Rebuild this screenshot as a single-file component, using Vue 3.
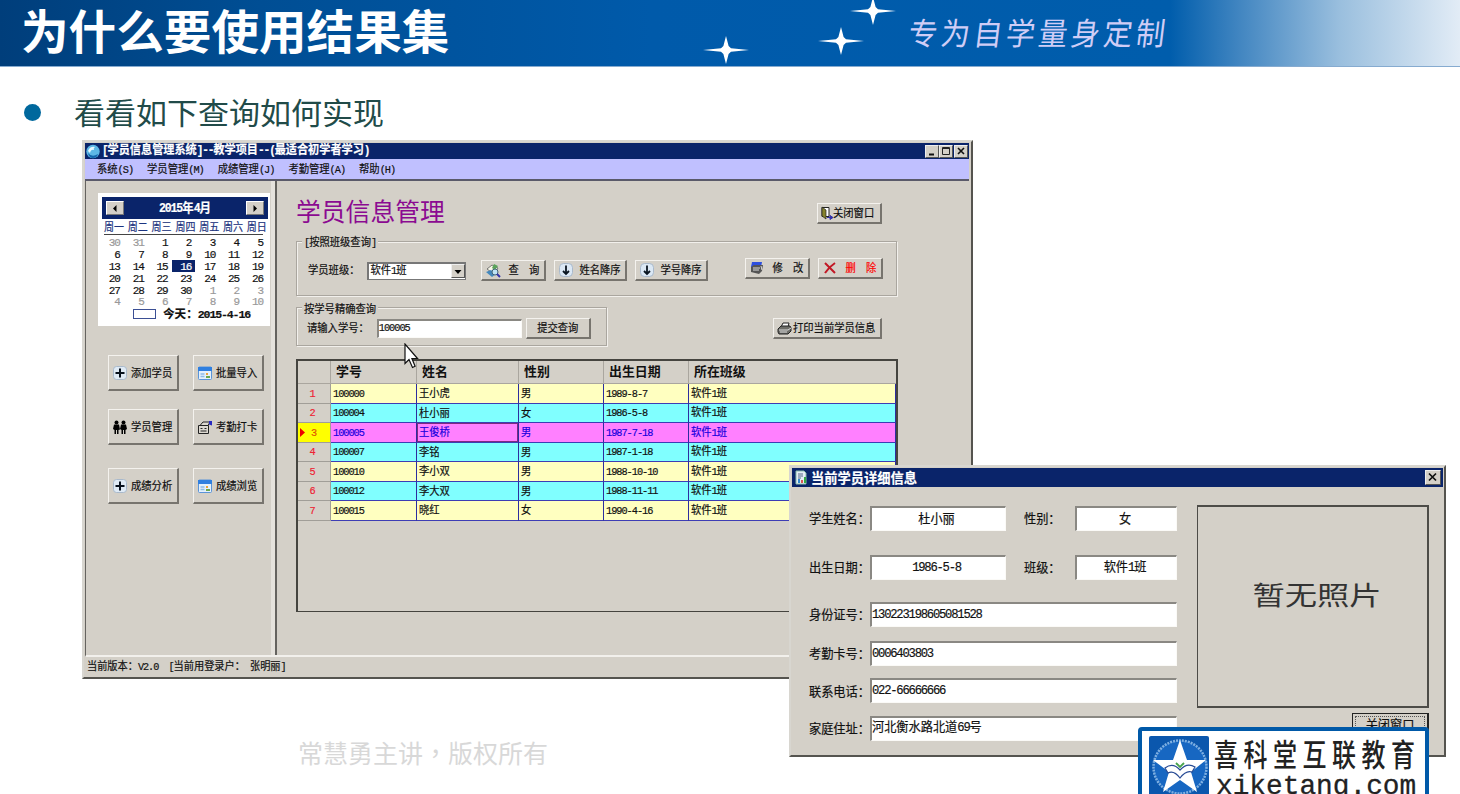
<script setup>
import { h } from 'vue'

// Half-width runs sit on half an em, full-width characters on one em.
const T = (props) =>
  h('span', { class: 'gt' }, props.t.split(/([\x20-\x7e]+)/).filter(Boolean).map((s) =>
    h('span', { class: /^[\x20-\x7e]/.test(s) ? 'hw' : 'fw' }, s)))
T.props = ['t']

const stars = [{ x: 726, y: 50 }, { x: 841, y: 41 }, { x: 873, y: 11 }]
const menus = [['系统', 'S'], ['学员管理', 'M'], ['成绩管理', 'J'], ['考勤管理', 'A'], ['帮助', 'H']]
const week = ['一', '二', '三', '四', '五', '六', '日']
const days = []
for (let i = 0; i < 42; i++) {
  const n = i < 2 ? 30 + i : i < 32 ? i - 1 : i - 31
  days.push({ n, dim: i < 2 || i > 31, now: i === 17 })
}
const tools = [
  ['plus', '添加学员'], ['cal', '批量导入'],
  ['people', '学员管理'], ['card', '考勤打卡'],
  ['plus', '成绩分析'], ['cal', '成绩浏览'],
]
const heads = ['', '学号', '姓名', '性别', '出生日期', '所在班级']
const rows = [
  ['100000', '王小虎', '男', '1989-8-7'],
  ['100004', '杜小丽', '女', '1986-5-8'],
  ['100005', '王俊桥', '男', '1987-7-18'],
  ['100007', '李铭', '男', '1987-1-18'],
  ['100010', '李小双', '男', '1988-10-10'],
  ['100012', '李大双', '男', '1988-11-11'],
  ['100015', '晓红', '女', '1990-4-16'],
].map((r) => [...r, '软件1班'])
const longFields = [
  ['身份证号：', '130223198605081528'],
  ['考勤卡号：', '0006403803'],
  ['联系电话：', '022-66666666'],
  ['家庭住址：', '河北衡水路北道69号'],
]
</script>

<template>
  <div class="slide">
    <header class="banner">
      <h1>为什么要使用结果集</h1>
      <svg class="stars" width="1460" height="66">
        <path v-for="s in stars" :key="s.x" :transform="`translate(${s.x} ${s.y})`" fill="#fff"
          d="M-23 0L-5-1.8-2.6-4 0-14 2.6-4 5-1.8 23 0 5 1.8 2.6 4 0 14-2.6 4-5 1.800Z" />
      </svg>
      <div class="slogan">专为自学量身定制</div>
    </header>
    <div class="point"><i></i><span>看看如下查询如何实现</span></div>
    <div class="watermark">常慧勇主讲<span>，</span>版权所有</div>

    <section class="win main-win">
      <div class="titlebar">
        <svg class="globe" width="14" height="15" viewBox="0 0 14 15">
          <circle cx="7" cy="7.5" r="6.7" fill="#5db7e6" /><path d="M2 9q4 5 10 1q-1 4-5 4t-5-5" fill="#1466ad" />
          <path d="M2 7q2-5 7-4q-2 1-1 3q-3-1-4 3z" fill="#e6f8ff" />
        </svg>
        <T t="[学员信息管理系统]--教学项目--(最适合初学者学习)" />
        <div class="caps">
          <b><svg width="13" height="11"><path d="M3 8.5h5" stroke="#111" stroke-width="2" /></svg></b>
          <b><svg width="13" height="11"><path d="M2.5 1.5h7v7h-7zM2.5 2.5h7" stroke="#222" fill="none" /></svg></b>
          <b class="x"><svg width="13" height="11"><path d="M3 2l6 6M9 2l-6 6" stroke="#111" stroke-width="1.6" /></svg></b>
        </div>
      </div>
      <nav class="menu">
        <span v-for="m in menus" :key="m[0]"><T :t="m[0] + '('" /><u><T :t="m[1]" /></u><T t=")" /></span>
      </nav>
      <div class="client">
        <aside>
          <div class="calendar">
            <div class="month">
              <b><svg width="16" height="13"><path d="M9.500 3v7L6 6.500z" /></svg></b>
              <T t="2015年4月" />
              <b><svg width="16" height="13"><path d="M6.500 3v7L10 6.500z" /></svg></b>
            </div>
            <div class="week"><span v-for="w in week" :key="w"><T :t="'周' + w" /></span></div>
            <div class="days">
              <span v-for="(d, i) in days" :key="i" :class="{ dim: d.dim, now: d.now }"><T :t="String(d.n)" /></span>
            </div>
            <div class="today"><i></i><T t="今天：2015-4-16" /></div>
          </div>
          <div class="tools">
            <button v-for="(b, i) in tools" :key="i" class="btn">
              <svg width="14" height="14" viewBox="0 0 14 14">
                <template v-if="b[0] === 'plus'">
                  <rect x=".5" y=".5" width="13" height="13" rx="3" fill="#dfeaf5" stroke="#a9b9cb" />
                  <path d="M7 2.500v9M2.500 7h9" stroke="#06101c" stroke-width="2" />
                </template>
                <template v-else-if="b[0] === 'cal'">
                  <rect x=".5" y="1" width="13" height="12.500" rx="1" fill="#e4f0fc" stroke="#5a94d8" />
                  <path d="M0 1h14v4H0z" fill="#2f7fe0" />
                  <path d="M2.500 8h4M2.500 10.500h4" stroke="#8dbbe8" stroke-width="1.500" />
                  <path d="M8 7h2v2H8z" fill="#e8a33b" /><path d="M8 10h4v2H8z" fill="#6aa84f" />
                </template>
                <template v-else-if="b[0] === 'people'">
                  <circle cx="3.500" cy="2.500" r="2" /><circle cx="10.500" cy="2.500" r="2" />
                  <path d="M1 4.500h5l1 5-1.500.5V14H4V10H3v4H1.500V10L0 9zM8 4.500h5l1 4.500-1.500 1v4H11v-4h-1v4H8.500v-4L7 9z" />
                </template>
                <template v-else>
                  <path d="M.500 5.500h10v8h-10zM2 5.500l3-3.500h7l-2 3.500" fill="#dcd8d0" stroke="#222" />
                  <path d="M2.500 8.500h2M6.500 8.500h2M2.500 11h6" stroke="#222" />
                  <path d="M11 1h3v4.500l-3-1z" fill="#2a2ac0" />
                </template>
              </svg>
              <T :t="b[1]" />
            </button>
          </div>
        </aside>
        <main>
          <div class="heading">
            <h2>学员信息管理</h2>
            <button class="btn">
              <svg width="12" height="14" viewBox="0 0 12 14"><path d="M1 1.500h7v9H1z" fill="#fff" stroke="#222" /><path d="M1 1l4 3v9l-4-3z" fill="#85822b" stroke="#222" stroke-width=".7" /><path d="M6 11.500h4M9 9.500l3 2-3 2z" fill="#33a" stroke="#33a" /></svg>
              <T t="关闭窗口" />
            </button>
          </div>
          <div class="group by-class">
            <span class="legend"><T t="[按照班级查询]" /></span>
            <span class="lbl"><T t="学员班级：" /></span>
            <div class="select"><T t="软件1班" /><b><svg width="13" height="13"><path d="M2.500 5h7L6 9z" /></svg></b></div>
            <button class="btn query">
              <svg width="15" height="15" viewBox="0 0 15 15"><path d="M1 6l5-4 6 3-4 6z" fill="#f5f5e6" stroke="#777" /><path d="M8 1l4 2-3 4-3-2z" fill="#5ba35b" /><path d="M0 9l5-2 5 4-4 3z" fill="#4488bd" /><circle cx="9" cy="9" r="3" fill="#bfe3f5" stroke="#467" /><path d="M11 11l3 3" stroke="#33a" stroke-width="2" /></svg>
              <T t="查  询" />
            </button>
            <button v-for="s in ['姓名降序', '学号降序']" :key="s" class="btn sort">
              <svg width="14" height="14" viewBox="0 0 14 14"><rect x=".5" y=".5" width="13" height="13" rx="4" fill="#dbe8f5" stroke="#a9b9cb" /><path d="M7 2.500v8M4 8l3 3 3-3" fill="none" stroke="#0a1622" stroke-width="1.800" /></svg>
              <T :t="s" />
            </button>
            <button class="btn edit">
              <svg width="14" height="14" viewBox="0 0 14 14"><path d="M2 1h10l-1 5H1z" fill="#2d4fe0" /><path d="M1 6l3-2h9l-1 6-3 3-8-2z" fill="#555" /><path d="M3 7h7M3 9h6M11 5l1 4" stroke="#ddd" /></svg>
              <T t="修  改" />
            </button>
            <button class="btn del">
              <svg width="14" height="14" viewBox="0 0 14 14"><path d="M2 2q5 5 10 10M12 2Q6 6 2 12" fill="none" stroke="#c21825" stroke-width="2" /></svg>
              <T t="删  除" />
            </button>
          </div>
          <div class="second">
            <div class="group by-no">
              <span class="legend"><T t="按学号精确查询" /></span>
              <span class="lbl"><T t="请输入学号：" /></span>
              <div class="field"><T t="100005" /></div>
              <button class="btn"><T t="提交查询" /></button>
            </div>
            <button class="btn print">
              <svg width="15" height="13" viewBox="0 0 15 13"><path d="M4 5l2-4h6l-1 4z" fill="#fff" stroke="#222" /><path d="M1 7l3-3h9l1 2v3l-3 3H2L1 10z" fill="#6d6d68" stroke="#222" /><path d="M2 8h9l3-2M3 10h7" stroke="#ddd" fill="none" /></svg>
              <T t="打印当前学员信息" />
            </button>
          </div>
          <div class="table">
            <div class="tr th"><span v-for="(c, i) in heads" :key="i"><T :t="c" /></span></div>
            <div v-for="(r, i) in rows" :key="i" class="tr" :class="{ alt: i % 2, sel: i === 2 }">
              <span class="no"><svg v-if="i === 2" width="6" height="9"><path d="M0 0l5 4.500-5 4.500z" fill="#e00" /></svg><T :t="String(i + 1)" /></span>
              <span v-for="(c, j) in r" :key="j" :class="{ focus: i === 2 && j === 1 }"><T :t="c" /></span>
            </div>
          </div>
        </main>
      </div>
      <footer><T t="当前版本：V2.0  [当前用登录户： 张明丽]" /></footer>
      <svg class="cursor" width="16" height="26" viewBox="0 0 16 26"><path d="M1 1v19.500l4-4 3.500 8 2.600-1.300-3.200-7.700H13.500z" fill="#fff" stroke="#111" stroke-width="1.200" /></svg>
    </section>

    <section class="win dialog">
      <div class="titlebar">
        <svg width="12" height="15" viewBox="0 0 12 15"><path d="M1 1h8l2 2v11H1z" fill="#e5eef5" stroke="#8ba" /><path d="M3 4h5M3 6h5M3 8h3" stroke="#568" /><path d="M3 9h2v4H3z" fill="#38c" /><path d="M6 10h2v3H6z" fill="#d55" /><path d="M9 7h2v6H9z" fill="#3a4" /></svg>
        <T t="当前学员详细信息" />
        <div class="caps"><b><svg width="14" height="13"><path d="M3 2.500l7 7M10 2.500l-7 7" stroke="#111" stroke-width="1.700" /></svg></b></div>
      </div>
      <div class="detail">
        <div class="form">
          <div class="pair"><label><T t="学生姓名：" /></label><div class="field mid"><T t="杜小丽" /></div><label class="l2"><T t="性别：" /></label><div class="field small"><T t="女" /></div></div>
          <div class="pair"><label><T t="出生日期：" /></label><div class="field mid"><T t="1986-5-8" /></div><label class="l2"><T t="班级：" /></label><div class="field small"><T t="软件1班" /></div></div>
          <div v-for="f in longFields" :key="f[0]" class="pair long"><label><T :t="f[0]" /></label><div class="field"><T :t="f[1]" /></div></div>
        </div>
        <div class="side">
          <div class="photo"><span>暂无照片</span></div>
          <button class="btn"><i><T t="关闭窗口" /></i></button>
        </div>
      </div>
    </section>

    <div class="brand">
      <svg width="60" height="60" viewBox="0 0 60 60">
        <rect width="60" height="60" rx="2" fill="#0b57ad" />
        <circle cx="31" cy="31" r="26.500" fill="#1767c2" stroke="#7fb0e2" stroke-width="2.500" stroke-dasharray="2 1" />
        <path d="M31 4l7 20h19L42 36l6 20-17-12-17 12 6-20L4 24h20z" fill="#fff" />
        <path d="M16 32q8-6 15 2q7-8 15-3l-3 5q-6-2-12 6q-6-8-12-5z" fill="#fff" stroke="#274a94" stroke-width="1.200" />
        <path d="M27 27l4 4 4-4" fill="none" stroke="#49a34c" stroke-width="1.800" />
      </svg>
      <div><div class="cn">喜科堂互联教育</div><div class="en">xiketang.com</div></div>
    </div>
  </div>
</template>

<style>
body { overflow: hidden; background: #fff; }
.gt { display: inline-block; white-space: pre; transform: scaleY(1.12); -webkit-text-stroke: .18px; }
.gt .hw { font-family: "Liberation Mono", monospace; letter-spacing: -0.1em; }
</style>

<style scoped>
* { box-sizing: border-box; }
.slide { position: relative; width: 1460px; height: 794px; overflow: hidden; background: #fff; font-family: "Noto Sans CJK SC", sans-serif; color: #111; line-height: 1; }
.banner { position: relative; height: 67px; border-bottom: 1px solid #86abd0; background: linear-gradient(90deg, #003e7b 0, #004e94 260px, #005aaa 650px, #005dac 1170px, #4286c1 1240px, #9abfde 1340px, #e2ecf6 1460px); }
h1 { margin: 0; padding: 5px 0 0 21px; font-size: 47.600px; line-height: 50px; font-weight: 700; color: #fff; transform: scaleY(.97); transform-origin: 0 0; }
.stars { position: absolute; left: 0; top: 0; }
.slogan { position: absolute; left: 909px; top: 12px; font-size: 29px; line-height: 38px; letter-spacing: 3.500px; font-weight: 400; color: #cfcdf6; transform: skewX(-7deg) scaleY(1.08); white-space: nowrap; }
.point { display: flex; align-items: center; height: 90px; padding-left: 24px; color: #214b49; font-size: 31px; font-weight: 400; }
.point i { width: 17px; height: 17px; border-radius: 50%; background: #00689d; margin-right: 33px; }
.point span { transform: translateY(-1px) scaleY(.96); }
.watermark { position: absolute; left: 298px; top: 740px; font-size: 25px; font-weight: 400; color: #d8d8d8; white-space: nowrap; }
.watermark span { font-family: "Noto Sans CJK TC", sans-serif; }

.win { position: absolute; display: flex; flex-direction: column; background: #d4d0c8; border: 2px solid #55544f; border-left-color: #d8d6d0; border-top-color: #d8d6d0; }
.titlebar { display: flex; align-items: center; background: #0a246a; color: #fff; font-weight: 700; }
.caps { margin-left: auto; display: flex; }
.caps b { display: flex; background: #d4d0c8; border: 1px solid #eee; border-right-color: #555; border-bottom-color: #555; }
.main-win { left: 82px; top: 140px; width: 891px; height: 539px; padding: 1px 2px 0 1px; font-size: 10.300px; }
.main-win .titlebar { height: 16px; font-size: 11.150px; padding-left: 1px; }
.globe { margin-right: 2px; }
.main-win .caps b { width: 14px; height: 13px; }
.main-win .caps { padding-right: 1px; }
.main-win .caps .x { margin-left: 1px; }
.menu { display: flex; gap: 14px; height: 22px; align-items: center; padding: 2px 0 0 12px; background: #c0c0ff; border-bottom: 2px solid #5a5a6a; }
.menu u { text-underline-offset: 1px; }
.client { display: flex; height: 476px; border-left: 1px solid #65635f; border-bottom: 2px solid #f2f0ec; }
aside { width: 189px; padding: 12px 0 0 12px; border-right: 4px solid #e6e3dd; }
.calendar { width: 172px; height: 133px; background: #fff; padding: 4px; }
.month { display: flex; align-items: center; justify-content: space-between; height: 22px; width: 166px; padding: 0 4px; background: #0a246a; color: #fff; font-size: 11.500px; font-weight: 700; }
.month b { display: flex; width: 18px; height: 14px; background: #d4d0c8; border: 1px solid #fff; border-right-color: #777; border-bottom-color: #777; }
.week { display: grid; grid-template-columns: repeat(7, 23.800px); height: 16px; margin: 0 3px 0 2px; align-items: center; color: #1c3480; font-size: 10px; border-bottom: 1px solid #444; }
.days { display: grid; grid-template-columns: repeat(7, 23.850px); grid-auto-rows: 11.900px; font-size: 11px; margin-top: 1px; margin-left: -2px; }
.days > span { display: flex; align-items: center; justify-content: flex-end; padding-right: 4px; }
.days :deep(.gt) { transform: none; line-height: 10px; -webkit-text-stroke: .2px; }
.days .dim { color: #999; }
.days .now { background: #0a246a; color: #fff; }
.today { display: flex; align-items: center; height: 14px; padding-left: 31px; font-weight: 700; font-size: 11.600px; }
.today i { width: 23px; height: 10px; border: 1px solid #3b4f94; margin-right: 7px; }
.today :deep(.gt) { transform: none; }
.btn { display: flex; align-items: center; font: inherit; color: #111; padding: 0; background: #d4d0c8; border: 1px solid; border-width: 1px 2px 2px 1px; border-color: #f4f2ee #77746e #77746e #f4f2ee; white-space: nowrap; }
.tools { display: grid; grid-template-columns: 71px 71px; grid-template-rows: 36px 36px 36px; column-gap: 14px; row-gap: 18px; padding: 29px 0 0 10px; }
.tools .btn { padding-left: 4px; gap: 4px; }
.tools .btn :deep(.gt) { margin-top: 1px; }
.tools .btn:nth-child(n+5) { transform: translateY(5px); }
main { flex: 1; border-left: 2px solid #65635f; padding-left: 19px; }
.heading { display: flex; justify-content: space-between; padding-top: 17px; height: 60px; width: 586px; }
h2 { margin: 0; font-size: 24.800px; font-weight: 400; line-height: 25px; color: #8b0a91; }
.heading .btn { width: 65px; height: 21px; margin-top: 5px; padding-left: 3px; }
.group { position: relative; display: flex; align-items: center; border: 1px solid #aaa69f; box-shadow: 1px 1px #f2f0ec, inset 1px 1px #f2f0ec; }
.legend { position: absolute; left: 5px; top: -7px; padding: 1px 2px; background: #d4d0c8; line-height: 11px; }
.by-class { width: 601px; height: 55px; padding: 4px 0 0 11px; }
.lbl { flex: none; }
.select { display: flex; align-items: center; width: 99px; height: 18px; margin-left: 8px; padding-left: 1px; background: #fff; border: 1px solid #777; border-width: 2px 1px 1px 2px; }
.select b { margin-left: auto; width: 14px; height: 14px; background: #d4d0c8; border: 1px solid #eee; border-right-color: #555; border-bottom-color: #555; display: flex; }
.query { width: 65px; height: 21px; margin-left: 15px; padding-left: 4px; gap: 7px; }
.sort { width: 73px; height: 21px; margin-left: 8px; padding-left: 4px; gap: 6px; }
.edit { width: 65px; height: 21px; margin-left: 37px; padding-left: 4px; gap: 8px; transform: translateY(-2px); }
.del { width: 65px; height: 21px; margin-left: 8px; padding-left: 4px; gap: 8px; color: #f00; transform: translateY(-2px); }
.by-class .btn :deep(.gt), .by-no .btn :deep(.gt), .print :deep(.gt) { margin-top: 1px; }
.second { display: flex; align-items: flex-start; justify-content: space-between; width: 586px; padding-top: 11px; height: 63px; }
.by-no { width: 311px; height: 39px; padding: 3px 0 0 10px; }
.field { display: flex; align-items: center; background: #fff; border: 2px solid #fbfaf7; border-width: 2px 1px 1px 2px; border-top-color: #8a8883; border-left-color: #8a8883; }
.by-no .field { width: 145px; height: 19px; margin-left: 8px; padding-bottom: 2px; }
.by-no .btn { width: 65px; height: 21px; margin-left: 4px; justify-content: center; }
.print { width: 109px; height: 21px; padding-left: 3px; gap: 1px; margin-top: 11px; }
.table { width: 602px; height: 253px; border: 2px solid #45443f; border-width: 2px 2px 1px 2px; }
.tr { display: grid; grid-template-columns: 33px 86px 102px 85px 85px 207px; height: 19.520px; background: #ffffc0; }
.tr > span { display: flex; align-items: center; padding-left: 2px; border-right: 1px solid #2d2da0; border-bottom: 1px solid #3d3db4; }
.tr.alt { background: #80ffff; }
.tr.sel { background: #ff80ff; color: #1a00e0; }
.tr .focus { box-shadow: inset 0 0 0 1px #7d2a80; }
.tr > span.no { justify-content: center; gap: 5px; padding: 0 4px 0 0; background: #d4d0c8; color: #ee2233; border-color: #a19e98; }
.tr.sel > .no { background: #ff0; padding-right: 12px; color: #e05500; }
.tr.th { height: 23px; background: #d4d0c8; font-size: 12.900px; font-weight: 700; }
.tr.th > span { padding-left: 5px; border-color: #aaa69f; }
.tr.th > span:last-child { border-right: 0; }
.tr.th :deep(.gt) { transform: translateY(-1px); -webkit-text-stroke: 0; }
footer { padding: 4px 0 0 2px; font-size: 10.200px; }
.cursor { position: absolute; left: 320px; top: 201px; }

.dialog { left: 789px; top: 465px; width: 657px; height: 292px; padding: 1px; font-size: 12.200px; }
.dialog :deep(.gt) { transform: scaleY(1.06); }
.dialog .titlebar { height: 19px; padding: 0 2px 0 3px; font-size: 13.250px; gap: 4px; }
.dialog .caps b { width: 16px; height: 15px; }
.detail { display: flex; padding: 18px 0 0 17px; }
.form { width: 368px; }
.pair { display: flex; align-items: center; height: 26px; margin-bottom: 23px; }
.pair label { width: 61px; flex: none; white-space: nowrap; }
.pair label :deep(.gt) { margin-top: -1px; }
.pair .field { flex: 1; height: 25px; }
.pair .mid { flex: 0 0 136px; justify-content: center; padding-right: 4px; }
.pair .l2 { width: 51px; margin-left: 18px; }
.pair .small { justify-content: center; padding-right: 3px; }
.pair.long { height: 25px; margin-bottom: 12.300px; }
.pair.long :deep(.gt) { margin-top: -2px; }
.pair:nth-child(3) { margin-bottom: 14px; margin-top: -1px; }
.side { margin-left: 20px; width: 232px; }
.photo { display: flex; align-items: center; justify-content: center; height: 203px; border: 2px solid #4d4c48; border-left-width: 1px; padding: 0 0 25px 9px; font-size: 32.300px; font-weight: 400; color: #333; }
.photo span { transform: scaleY(.8); }
.side .btn { width: 77px; height: 24px; margin: 5px 0 0 155px; padding: 2px; border: 1px solid #222; border-width: 1px 2px 2px 1px; }
.side .btn i { flex: 1; height: 18px; border: 1px dotted #555; font-style: normal; display: flex; justify-content: center; align-items: center; }

.brand { position: absolute; left: 1138px; top: 727px; width: 291px; height: 90px; border: 4px solid #0059a8; border-radius: 4px; background: #fff; display: flex; padding: 5px 0 0 7px; color: #222; }
.brand > div { padding-left: 5px; white-space: nowrap; }
.cn { font-size: 24px; line-height: 35px; letter-spacing: 5.500px; font-weight: 500; transform: translateY(-1px) scaleY(1.28); }
.en { font-family: "Liberation Mono", monospace; font-size: 27.800px; line-height: 28px; margin: 2px 0 0 2px; -webkit-text-stroke: .3px; }
</style>
